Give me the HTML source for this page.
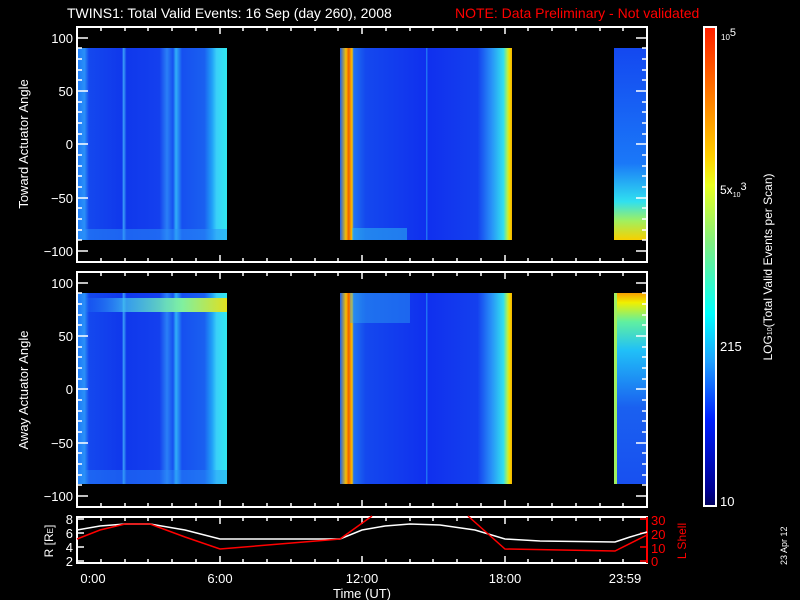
<!DOCTYPE html>
<html><head><meta charset="utf-8"><style>
html,body{margin:0;padding:0;background:#000;width:800px;height:600px;overflow:hidden}
svg{display:block}
text{font-family:"Liberation Sans",sans-serif;fill:#fff}
</style></head><body>
<svg width="800" height="600" viewBox="0 0 800 600" xmlns="http://www.w3.org/2000/svg">
<defs>
<linearGradient id="b1" x1="0" x2="1" y1="0" y2="0">
<stop offset="0" stop-color="#1a78f8"/><stop offset="0.05" stop-color="#2a90f8"/><stop offset="0.08" stop-color="#1448ee"/>
<stop offset="0.3" stop-color="#1038ec"/><stop offset="0.31" stop-color="#3aa0f8"/><stop offset="0.33" stop-color="#1038ec"/>
<stop offset="0.55" stop-color="#1440ee"/><stop offset="0.6" stop-color="#2a80f6"/><stop offset="0.64" stop-color="#1650f0"/>
<stop offset="0.66" stop-color="#30b0f8"/><stop offset="0.7" stop-color="#1650f0"/>
<stop offset="0.85" stop-color="#1a60f0"/><stop offset="0.9" stop-color="#20a0f8"/><stop offset="0.93" stop-color="#3ad0f8"/><stop offset="1" stop-color="#30e8f0"/>
</linearGradient>
<linearGradient id="b2" x1="0" x2="1" y1="0" y2="0">
<stop offset="0" stop-color="#1c60f0"/><stop offset="0.035" stop-color="#f8c000"/><stop offset="0.05" stop-color="#f06000"/><stop offset="0.07" stop-color="#f8c000"/><stop offset="0.08" stop-color="#2070f0"/>
<stop offset="0.15" stop-color="#1448ee"/><stop offset="0.5" stop-color="#1030ee"/><stop offset="0.505" stop-color="#2aa0f8"/><stop offset="0.51" stop-color="#1030ee"/>
<stop offset="0.8" stop-color="#1440ee"/><stop offset="0.88" stop-color="#2890f8"/><stop offset="0.95" stop-color="#30e0f0"/><stop offset="0.975" stop-color="#c0f040"/><stop offset="0.985" stop-color="#f0e000"/><stop offset="1" stop-color="#f8b000"/>
</linearGradient>
<linearGradient id="b3" x1="0" x2="0" y1="0" y2="1">
<stop offset="0" stop-color="#1448f0"/><stop offset="0.6" stop-color="#1a78f8"/><stop offset="0.8" stop-color="#30e0f0"/><stop offset="0.9" stop-color="#a0f060"/><stop offset="1" stop-color="#f8d000"/>
</linearGradient>
<linearGradient id="b6" x1="0" x2="0" y1="0" y2="1">
<stop offset="0" stop-color="#f8a000"/><stop offset="0.05" stop-color="#f0f000"/><stop offset="0.15" stop-color="#60f0a0"/><stop offset="0.3" stop-color="#20c0f8"/><stop offset="0.6" stop-color="#1a60f0"/><stop offset="1" stop-color="#1850f0"/>
</linearGradient>
<linearGradient id="top4" x1="0" x2="1" y1="0" y2="0">
<stop offset="0" stop-color="#1a78f8" stop-opacity="0"/><stop offset="0.3" stop-color="#40c0f0" stop-opacity="0.7"/><stop offset="0.7" stop-color="#80f0a0"/><stop offset="1" stop-color="#e0e020"/>
</linearGradient>
<linearGradient id="cb" x1="0" x2="0" y1="0" y2="1">
<stop offset="0" stop-color="#ff2000"/><stop offset="0.15" stop-color="#ff8000"/><stop offset="0.27" stop-color="#ffd000"/><stop offset="0.33" stop-color="#e8ff20"/>
<stop offset="0.45" stop-color="#80f080"/><stop offset="0.6" stop-color="#00ffff"/><stop offset="0.7" stop-color="#20a0ff"/><stop offset="0.82" stop-color="#0020ff"/><stop offset="0.97" stop-color="#000090"/><stop offset="1" stop-color="#000060"/>
</linearGradient>
</defs>

<rect x="77" y="48" width="150" height="192" fill="url(#b1)"/>
<rect x="77" y="229" width="150" height="11" fill="#2a90f8" opacity="0.5"/>
<rect x="340" y="48" width="172" height="192" fill="url(#b2)"/>
<rect x="352" y="228" width="55" height="12" fill="#30c0f0" opacity="0.5"/>
<rect x="614" y="48" width="33" height="192" fill="url(#b3)"/>
<rect x="77" y="293" width="150" height="191" fill="url(#b1)"/>
<rect x="77" y="298" width="150" height="14" fill="url(#top4)"/>
<rect x="77" y="470" width="150" height="14" fill="#2a90f8" opacity="0.4"/>
<rect x="340" y="293" width="172" height="191" fill="url(#b2)"/>
<rect x="350" y="293" width="60" height="30" fill="#30b0f0" opacity="0.4"/>
<rect x="614" y="293" width="33" height="191" fill="url(#b6)"/>
<rect x="614" y="293" width="3" height="191" fill="#a0f060"/>

<g stroke="#fff" stroke-width="2" fill="none">
<rect x="77" y="27" width="570" height="235"/>
<rect x="77" y="272" width="570" height="235"/>
<rect x="77" y="517" width="570" height="46"/>
<rect x="704" y="27" width="12" height="479"/>
</g>
<rect x="705" y="28" width="10" height="477" fill="url(#cb)"/>

<g stroke="#fff" stroke-width="1.5">
<path d="M101 262v-4M125 262v-4M148 262v-4M172 262v-4M196 262v-4M220 262v-7M243 262v-4M267 262v-4M291 262v-4M315 262v-4M338 262v-4M362 262v-7M386 262v-4M410 262v-4M433 262v-4M457 262v-4M481 262v-4M505 262v-7M528 262v-4M552 262v-4M576 262v-4M600 262v-4M623 262v-4"/>
<path d="M101 27v4M125 27v4M148 27v4M172 27v4M196 27v4M220 27v7M243 27v4M267 27v4M291 27v4M315 27v4M338 27v4M362 27v7M386 27v4M410 27v4M433 27v4M457 27v4M481 27v4M505 27v7M528 27v4M552 27v4M576 27v4M600 27v4M623 27v4"/>
<path d="M101 507v-4M125 507v-4M148 507v-4M172 507v-4M196 507v-4M220 507v-7M243 507v-4M267 507v-4M291 507v-4M315 507v-4M338 507v-4M362 507v-7M386 507v-4M410 507v-4M433 507v-4M457 507v-4M481 507v-4M505 507v-7M528 507v-4M552 507v-4M576 507v-4M600 507v-4M623 507v-4"/>
<path d="M101 272v4M125 272v4M148 272v4M172 272v4M196 272v4M220 272v7M243 272v4M267 272v4M291 272v4M315 272v4M338 272v4M362 272v7M386 272v4M410 272v4M433 272v4M457 272v4M481 272v4M505 272v7M528 272v4M552 272v4M576 272v4M600 272v4M623 272v4"/>
<path d="M101 563v-4M125 563v-4M148 563v-4M172 563v-4M196 563v-4M220 563v-7M243 563v-4M267 563v-4M291 563v-4M315 563v-4M338 563v-4M362 563v-7M386 563v-4M410 563v-4M433 563v-4M457 563v-4M481 563v-4M505 563v-7M528 563v-4M552 563v-4M576 563v-4M600 563v-4M623 563v-4"/>
<path d="M101 517v4M125 517v4M148 517v4M172 517v4M196 517v4M220 517v7M243 517v4M267 517v4M291 517v4M315 517v4M338 517v4M362 517v7M386 517v4M410 517v4M433 517v4M457 517v4M481 517v4M505 517v7M528 517v4M552 517v4M576 517v4M600 517v4M623 517v4"/>
<path d="M77 38h11M77 91h11M77 144h11M77 198h11M77 251h11M647 38h-11M647 91h-11M647 144h-11M647 198h-11M647 251h-11"/>
<path d="M77 48h5M77 59h5M77 70h5M77 80h5M77 102h5M77 112h5M77 123h5M77 134h5M77 155h5M77 166h5M77 176h5M77 187h5M77 208h5M77 219h5M77 230h5M77 240h5"/>
<path d="M647 48h-5M647 59h-5M647 70h-5M647 80h-5M647 102h-5M647 112h-5M647 123h-5M647 134h-5M647 155h-5M647 166h-5M647 176h-5M647 187h-5M647 208h-5M647 219h-5M647 230h-5M647 240h-5"/>
<path d="M77 283h11M77 336h11M77 389h11M77 443h11M77 496h11M647 283h-11M647 336h-11M647 389h-11M647 443h-11M647 496h-11"/>
<path d="M77 293h5M77 304h5M77 315h5M77 325h5M77 347h5M77 357h5M77 368h5M77 379h5M77 400h5M77 411h5M77 421h5M77 432h5M77 453h5M77 464h5M77 475h5M77 485h5"/>
<path d="M647 293h-5M647 304h-5M647 315h-5M647 325h-5M647 347h-5M647 357h-5M647 368h-5M647 379h-5M647 400h-5M647 411h-5M647 421h-5M647 432h-5M647 453h-5M647 464h-5M647 475h-5M647 485h-5"/>
<path d="M77 519h7M77 533h7M77 547h7M77 561h7"/>
</g>
<rect x="646" y="517" width="2" height="46" fill="#f00"/>
<path d="M647 519h-7M647 533h-7M647 547h-7M647 561h-7" stroke="#f00" stroke-width="1.5"/>

<polyline fill="none" stroke="#fff" stroke-width="1.5" points="77,530 100,526 125,524 150,524 185,530 220,539 340,539 362,530 385,526 410,524 440,525 475,530 505,539 540,541 615,542 630,537 647,532"/>
<polyline fill="none" stroke="#f00" stroke-width="1.5" points="77,539 100,530 125,524 150,524 185,537 220,549 340,539 372,516"/>
<polyline fill="none" stroke="#f00" stroke-width="1.5" points="468,516 505,549 615,551 647,535"/>

<text x="67" y="18" font-size="14">TWINS1: Total Valid Events: 16 Sep (day 260), 2008</text>
<text x="455" y="18" font-size="14" style="fill:#f00">NOTE: Data Preliminary - Not validated</text>
<g font-size="13" text-anchor="end">
<text x="73" y="43">100</text><text x="73" y="96">50</text><text x="73" y="149">0</text><text x="73" y="203">−50</text><text x="73" y="256">−100</text>
<text x="73" y="288">100</text><text x="73" y="341">50</text><text x="73" y="394">0</text><text x="73" y="448">−50</text><text x="73" y="501">−100</text>
<text x="73" y="524">8</text><text x="73" y="538">6</text><text x="73" y="552">4</text><text x="73" y="566">2</text>
</g>
<g font-size="13">
<text x="651" y="525" style="fill:#f00">30</text><text x="651" y="539" style="fill:#f00">20</text><text x="651" y="553" style="fill:#f00">10</text><text x="651" y="566" style="fill:#f00">0</text>
</g>
<g font-size="13" text-anchor="middle">
<text x="93" y="583">0:00</text><text x="220" y="583">6:00</text><text x="362" y="583">12:00</text><text x="505" y="583">18:00</text><text x="625" y="583">23:59</text>
<text x="362" y="598">Time (UT)</text>
</g>
<text transform="translate(28,144) rotate(-90)" font-size="13" text-anchor="middle">Toward Actuator Angle</text>
<text transform="translate(28,390) rotate(-90)" font-size="13" text-anchor="middle">Away Actuator Angle</text>
<text transform="translate(53,541) rotate(-90)" font-size="12" text-anchor="middle">R [R<tspan font-size="8">E</tspan>]</text>
<text transform="translate(686,541) rotate(-90)" font-size="12" text-anchor="middle" style="fill:#f00">L Shell</text>
<text transform="translate(772,267) rotate(-90)" font-size="12" text-anchor="middle">LOG<tspan font-size="7">10</tspan>(Total Valid Events per Scan)</text>
<text transform="translate(787,565) rotate(-90)" font-size="9">23 Apr 12</text>
<text x="721" y="40" font-size="8">10<tspan font-size="11" dy="-4">5</tspan></text>
<text x="720" y="194" font-size="12">5x<tspan font-size="7" dy="3">10</tspan><tspan font-size="11" dy="-7">3</tspan></text>
<text x="720" y="351" font-size="13">215</text>
<text x="720" y="506" font-size="13">10</text>
</svg>
</body></html>
